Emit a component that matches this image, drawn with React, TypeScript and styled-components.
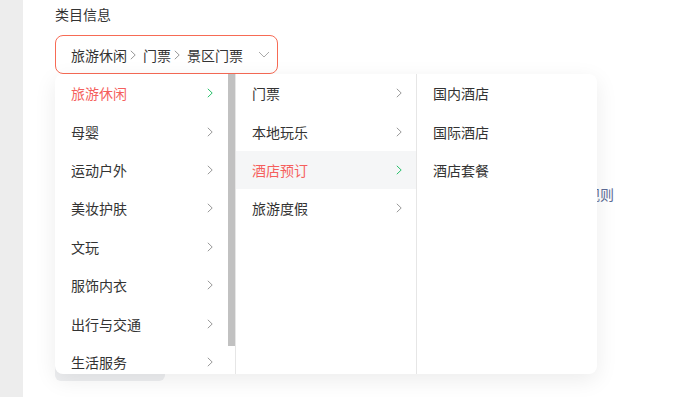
import React, { useState } from 'react';
import styled, { createGlobalStyle } from 'styled-components';

const GlobalStyle = createGlobalStyle`
  html, body { margin: 0; padding: 0; background: #fff; }
  body {
    font-family: "Noto Sans CJK SC", "Noto Sans", sans-serif;
    color: #333;
  }
`;

const Page = styled.div`
  display: flex;
  height: 397px;
  overflow: hidden;
`;

const Sidebar = styled.div`
  width: 23px;
  flex: none;
  background: #ededed;
`;

const Main = styled.div`
  flex: 1;
  padding: 5px 0 0 32px;
`;

const Label = styled.div`
  font-size: 14px;
  line-height: 18px;
  color: #333;
  height: 30px;
`;

const Field = styled.div`
  position: relative;
  width: 559px;
`;

const Select = styled.div`
  box-sizing: border-box;
  width: 223px;
  height: 39px;
  border: 1px solid #f76b55;
  border-radius: 8px;
  display: flex;
  align-items: center;
  padding: 0 7px 0 15px;
  font-size: 14px;
  color: #333;
`;

const Crumb = styled.span`
  white-space: nowrap;
`;

const Sep = styled.span`
  display: inline-flex;
  margin: 0 7px 0 3px;
  color: #999;
`;

const Caret = styled.span`
  margin-left: auto;
  display: inline-flex;
  color: #aaa;
`;

const Behind = styled.div`
  display: flex;
  justify-content: flex-end;
  margin-top: 110px;
`;

const Link = styled.span`
  font-size: 14px;
  color: #5d6b96;
`;

const Ghost = styled.div`
  width: 110px;
  height: 30px;
  margin-top: 147px;
  background: #eeeff1;
  border-radius: 6px;
`;

const Panel = styled.div`
  position: absolute;
  top: 39px;
  left: 0;
  width: 542px;
  height: 300px;
  background: #fff;
  border-radius: 8px;
  box-shadow: 0 6px 22px rgba(0, 0, 0, 0.08);
  display: grid;
  grid-template-columns: 181px 181px 180px;
  overflow: hidden;
`;

const Column = styled.div<{ $last?: boolean }>`
  position: relative;
  height: 300px;
  box-sizing: border-box;
  border-right: ${p => (p.$last ? 'none' : '1px solid #e6e6e6')};
  overflow: hidden;
`;

const Thumb = styled.div`
  position: absolute;
  top: 0;
  right: 0;
  width: 7px;
  height: 272px;
  background: #c1c1c1;
`;

const Row = styled.div<{ $active?: boolean; $hover?: boolean; $gutter?: number }>`
  height: 38.4px;
  display: flex;
  align-items: center;
  padding: 0 ${p => 14 + (p.$gutter || 0)}px 0 16px;
  font-size: 14px;
  color: ${p => (p.$active ? '#f55f5d' : '#333')};
  background: ${p => (p.$hover ? '#f5f6f7' : 'transparent')};
  cursor: pointer;
`;

const Arrow = styled.span<{ $active?: boolean }>`
  margin-left: auto;
  display: inline-flex;
  color: ${p => (p.$active ? '#27c06a' : '#999')};
`;

const Chevron = () => (
  <svg width="6" height="10" viewBox="0 0 6 10" fill="none">
    <path d="M0.8 0.8l4.4 4.2-4.4 4.2" stroke="currentColor" strokeWidth="1" />
  </svg>
);

const level1 = ['旅游休闲', '母婴', '运动户外', '美妆护肤', '文玩', '服饰内衣', '出行与交通', '生活服务'];
const level2 = ['门票', '本地玩乐', '酒店预订', '旅游度假'];
const level3 = ['国内酒店', '国际酒店', '酒店套餐'];

export default function App() {
  const [first, setFirst] = useState(0);
  const [second, setSecond] = useState(2);

  return (
    <>
      <GlobalStyle />
      <Page>
        <Sidebar />
        <Main>
          <Label>类目信息</Label>
          <Field>
            <Select>
              <Crumb>旅游休闲</Crumb>
              <Sep><Chevron /></Sep>
              <Crumb>门票</Crumb>
              <Sep><Chevron /></Sep>
              <Crumb>景区门票</Crumb>
              <Caret>
                <svg width="12" height="7" viewBox="0 0 12 7" fill="none">
                  <path d="M1 1l5 5 5-5" stroke="currentColor" strokeWidth="1" />
                </svg>
              </Caret>
            </Select>
            <Behind>
              <Link>查看规则</Link>
            </Behind>
            <Ghost />
            <Panel>
              <Column>
                {level1.map((name, i) => (
                  <Row key={name} $gutter={8} $active={i === first} onClick={() => setFirst(i)}>
                    {name}
                    <Arrow $active={i === first}><Chevron /></Arrow>
                  </Row>
                ))}
                <Thumb />
              </Column>
              <Column>
                {level2.map((name, i) => (
                  <Row key={name} $active={i === second} $hover={i === second} onClick={() => setSecond(i)}>
                    {name}
                    <Arrow $active={i === second}><Chevron /></Arrow>
                  </Row>
                ))}
              </Column>
              <Column $last>
                {level3.map(name => (
                  <Row key={name}>{name}</Row>
                ))}
              </Column>
            </Panel>
          </Field>
        </Main>
      </Page>
    </>
  );
}
